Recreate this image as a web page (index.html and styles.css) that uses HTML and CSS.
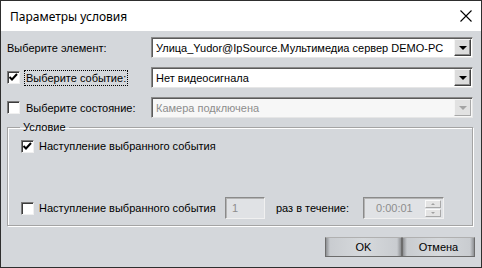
FILE: index.html
```html
<!DOCTYPE html>
<html lang="ru">
<head>
  <meta charset="UTF-8" />
  <title>Параметры условия</title>
  <link rel="stylesheet" href="styles.css">
</head>
<body>
  <div class="window">
    <div class="titlebar">
      <span class="title">Параметры условия</span>
      <svg class="close" width="12" height="12" viewBox="0 0 12 12">
        <path d="M0.5 0.5 L11.5 11.5 M11.5 0.5 L0.5 11.5" stroke="#000" stroke-width="1.1" fill="none"/>
      </svg>
    </div>

    <div class="content">
      <div class="row">
        <div class="label">Выберите элемент:</div>
        <div class="select">
          <span class="value">Улица_Yudor@IpSource.Мультимедиа сервер DEMO-PC</span>
          <span class="drop"><i class="arrow"></i></span>
        </div>
      </div>

      <div class="row">
        <div class="label">
          <span class="check on"><svg width="11" height="11" viewBox="0 0 11 11"><polyline points="1.5,5 4,7.5 9,2" stroke="#000" stroke-width="2" fill="none"/></svg></span>
          <span class="focus">Выберите событие:</span>
        </div>
        <div class="select">
          <span class="value">Нет видеосигнала</span>
          <span class="drop"><i class="arrow"></i></span>
        </div>
      </div>

      <div class="row">
        <div class="label">
          <span class="check"></span>
          <span class="text">Выберите состояние:</span>
        </div>
        <div class="select disabled">
          <span class="value">Камера подключена</span>
          <span class="drop"><i class="arrow"></i></span>
        </div>
      </div>

      <fieldset class="group">
        <legend>Условие</legend>
        <div class="opt">
          <span class="check on"><svg width="11" height="11" viewBox="0 0 11 11"><polyline points="1.5,5 4,7.5 9,2" stroke="#000" stroke-width="2" fill="none"/></svg></span>
          <span>Наступление выбранного события</span>
        </div>
        <div class="opt repeat">
          <span class="check"></span>
          <span class="rlabel">Наступление выбранного события</span>
          <span class="field count">1</span>
          <span class="per">раз в течение:</span>
          <span class="field time">
            <span class="tval">0:00:01</span>
            <span class="spin">
              <span class="sbtn"><i class="up"></i></span>
              <span class="sbtn"><i class="down"></i></span>
            </span>
          </span>
        </div>
      </fieldset>

      <div class="buttons">
        <button class="btn">OK</button>
        <button class="btn">Отмена</button>
      </div>
    </div>
  </div>
</body>
</html>
```

FILE: styles.css
```css
body {
  margin: 0;
  font-family: "Liberation Sans", Arial, sans-serif;
  font-size: 11px;
  color: #000;
}

.window {
  width: 482px;
  height: 268px;
  box-sizing: border-box;
  border: 1px solid #2e2e2e;
  background: #d4d7db;
  display: flex;
  flex-direction: column;
}

.titlebar {
  height: 30px;
  background: #fff;
  display: flex;
  align-items: center;
  justify-content: space-between;
  padding: 0 9px 0 9px;
}

.title {
  font-family: "Noto Sans", sans-serif;
  font-size: 12px;
}

.content {
  flex: 1;
  padding: 6px 8px 0 6px;
  display: flex;
  flex-direction: column;
}

.row {
  display: flex;
  align-items: center;
  height: 21px;
  margin-bottom: 9px;
}

.label {
  width: 144px;
  flex: none;
  display: flex;
  align-items: center;
}

.check {
  width: 11px;
  height: 11px;
  background: #fff;
  border: 1px solid;
  border-color: #7a7a7a #f0f0f0 #f0f0f0 #7a7a7a;
  box-shadow: inset 1px 1px 0 #3c3c3c;
  display: inline-flex;
  flex: none;
  margin-right: 4px;
}

.focus {
  border: 1px dotted #000;
  padding: 1px 1px;
}

.text {
  padding-left: 2px;
}

.select {
  flex: 1;
  min-width: 0;
  height: 21px;
  box-sizing: border-box;
  background: #fff;
  border: 1px solid;
  border-color: #8a8a8a #e6e6e6 #e6e6e6 #8a8a8a;
  box-shadow: inset 1px 1px 0 #5a5a5a;
  display: flex;
  align-items: center;
  padding: 0 1px 0 4px;
}

.select .value {
  flex: 1;
  min-width: 0;
  overflow: hidden;
  white-space: nowrap;
}

.drop {
  width: 17px;
  height: 17px;
  flex: none;
  box-sizing: border-box;
  background: #dcdcdc;
  border: 1px solid;
  border-color: #f4f4f4 #404040 #404040 #f4f4f4;
  box-shadow: inset -1px -1px 0 #8a8a8a;
  display: flex;
  align-items: center;
  justify-content: center;
}

.arrow {
  width: 0;
  height: 0;
  border-left: 4px solid transparent;
  border-right: 4px solid transparent;
  border-top: 4px solid #000;
}

.select.disabled {
  background: #f7f7f7;
}

.select.disabled .value {
  color: #8d8d8d;
}

.select.disabled .drop {
  background: #e2e2e2;
  border-color: #f4f4f4 #a8a8a8 #a8a8a8 #f4f4f4;
  box-shadow: none;
}

.select.disabled .arrow {
  border-top-color: #a4a4a4;
}

.group {
  margin: -6px 0 0 0;
  padding: 0 0 0 13px;
  height: 105px;
  box-sizing: border-box;
  border: 1px solid #a4a4a4;
  box-shadow: inset 1px 1px 0 #fff, 1px 1px 0 #fff;
  display: flex;
  flex-direction: column;
}

.group legend {
  padding: 0 3px;
  margin-left: -1px;
  line-height: 12px;
}

.opt {
  display: flex;
  align-items: center;
  height: 16px;
  margin-top: 5px;
}

.opt .check {
  margin-right: 5px;
}

.repeat {
  margin-top: 43px;
  height: 22px;
  white-space: nowrap;
}

.rlabel {
  width: 186px;
  flex: none;
}

.field {
  height: 22px;
  box-sizing: border-box;
  background: #e0e2e5;
  border: 1px solid;
  border-color: #8a8a8a #f0f0f0 #f0f0f0 #8a8a8a;
  box-shadow: inset 1px 1px 0 #b4b4b4;
  color: #8d8d8d;
  display: flex;
  align-items: center;
  flex: none;
}

.count {
  width: 40px;
  padding-left: 6px;
}

.per {
  margin: 0 14px 0 11px;
}

.time {
  width: 81px;
  padding: 0 2px 0 12px;
  justify-content: space-between;
}

.spin {
  display: flex;
  flex-direction: column;
  gap: 1px;
}

.sbtn {
  width: 16px;
  height: 8px;
  box-sizing: border-box;
  border: 1px solid;
  border-color: #fafafa #a8a8a8 #a8a8a8 #fafafa;
  background: #e4e4e4;
  display: flex;
  align-items: center;
  justify-content: center;
}

.up {
  border-left: 2px solid transparent;
  border-right: 2px solid transparent;
  border-bottom: 2px solid #a0a0a0;
}

.down {
  border-left: 2px solid transparent;
  border-right: 2px solid transparent;
  border-top: 2px solid #a0a0a0;
}

.buttons {
  display: flex;
  justify-content: flex-end;
  margin-top: 11px;
  margin-right: -2px;
}

.btn {
  height: 20px;
  font-family: inherit;
  font-size: 11px;
  color: #000;
  border: 1px solid #6c6c6c;
  border-top-color: #b0b0b0;
  background: linear-gradient(to right, #8e9093 0, #c9ccd0 4px, #d6d9dc 50%, #c9ccd0 calc(100% - 4px), #8e9093 100%);
  cursor: pointer;
}

.btn:first-child {
  width: 77px;
}

.btn:last-child {
  width: 73px;
}
```
